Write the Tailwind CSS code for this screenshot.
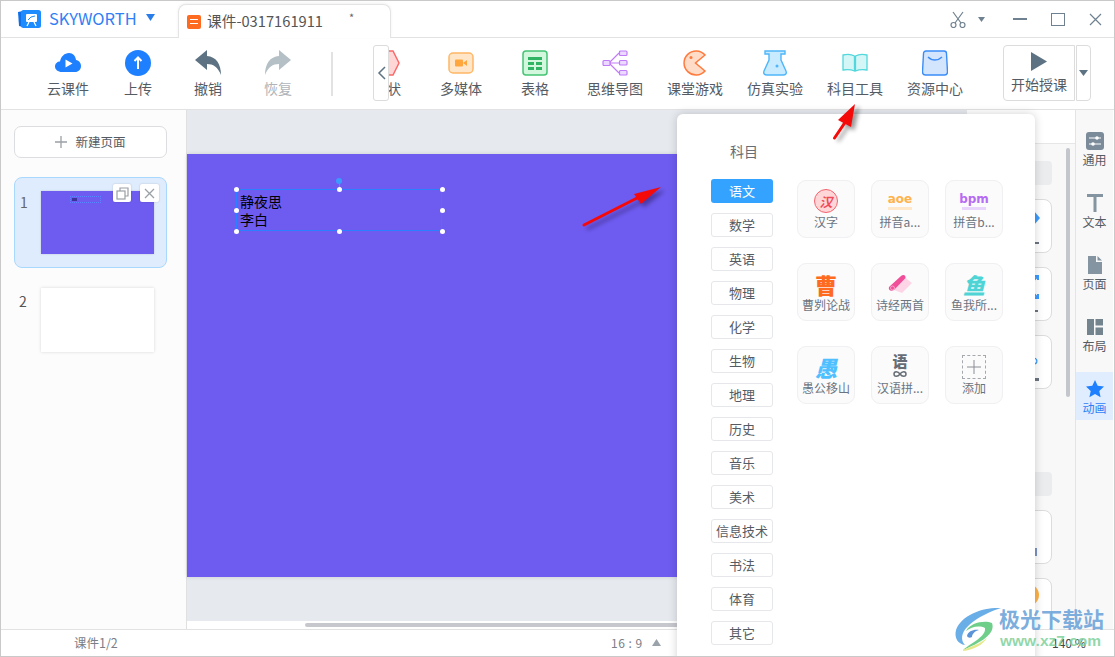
<!DOCTYPE html>
<html lang="zh">
<head>
    <meta charset="UTF-8">
    <meta name="viewport" content="width=device-width, initial-scale=1.0">
    <title>SKYWORTH</title>
    <script src="https://cdn.jsdelivr.net/npm/@tailwindcss/browser@4"></script>
</head>
<body class="bg-white">

<div class="relative w-[1115px] h-[657px] overflow-hidden border border-[#c9c9c9] bg-white text-[#555b63] flex flex-col [font-family:'Noto_Sans_CJK_SC','Liberation_Sans',sans-serif]">

    <!-- title bar -->
    <div class="relative h-[37px] shrink-0 border-b border-[#e2e2e2] flex items-center">
        <svg class="ml-[16px] mt-[-1px]" width="25" height="20" viewBox="0 0 25 20">
            <path d="M1 3 L6 2 L6 18 L2 17 Z" fill="#0f6fe8"/>
            <rect x="4" y="1" width="20" height="18" rx="2.500" fill="#1e8cff"/>
            <rect x="9" y="5" width="11" height="8" rx="1" fill="#fff"/>
            <path d="M12 13 L10 17 M17 13 L19 17" stroke="#fff" stroke-width="1.200" fill="none"/>
            <path d="M11 11 L14 8 L18 7" stroke="#1e8cff" stroke-width="1" fill="none"/>
        </svg>
        <span class="ml-[7px] text-[16.500px] leading-none text-[#2f80f6] mt-[-2px]">SKYWORTH</span>
        <svg class="ml-[9px] mt-[-3px]" width="9" height="7" viewBox="0 0 9 7"><path d="M0 0 H9 L4.500 7 Z" fill="#2a7de8"/></svg>

        <div class="absolute left-[177px] top-[3px] w-[213px] h-[34px] bg-white rounded-t-[8px] border border-b-0 border-[#e4e4e4] shadow-[0_-1px_3px_rgba(0,0,0,0.06)] flex items-center pl-[8px]">
            <div class="w-[14px] h-[14px] rounded-[2px] bg-[#ff6a21] flex flex-col items-center justify-center gap-[3px]">
                <div class="w-[8px] h-[1px] bg-white"></div>
                <div class="w-[8px] h-[1px] bg-white"></div>
            </div>
            <span class="ml-[6px] text-[14.700px] leading-none text-[#555]">课件-0317161911</span>
            <span class="absolute left-[170px] top-[7px] text-[11px] leading-none text-[#666]">*</span>
        </div>

        <div class="ml-auto flex items-center text-[#6b7f90]">
            <svg width="16" height="17" viewBox="0 0 16 17" fill="none" stroke="#6f8190" stroke-width="1.200"><path d="M3 1 L11 12 M13 1 L5 12"/><circle cx="3.500" cy="14" r="2.500"/><circle cx="12.500" cy="14" r="2.500"/></svg>
            <svg class="ml-[12px] mr-[28px]" width="7" height="5" viewBox="0 0 7 5"><path d="M0 0 H7 L3.500 5 Z" fill="#6f8190"/></svg>
            <div class="w-[14px] h-[2px] bg-[#6f8190]"></div>
            <div class="ml-[24px] w-[14px] h-[13px] border-[1.500px] border-[#6f8190]"></div>
            <svg class="ml-[24px] mr-[12px]" width="13" height="13" viewBox="0 0 13 13" stroke="#6f8190" stroke-width="1.200"><path d="M1 1 L12 12 M12 1 L1 12"/></svg>
        </div>
    </div>

    <!-- toolbar -->
    <div class="relative h-[72px] shrink-0 border-b border-[#e2e2e2] flex items-start pl-[32px] text-[14px] leading-[18px] text-[#555b63]">
        <div class="w-[70px] pt-[12px] flex flex-col items-center">
            <svg width="26" height="26" viewBox="0 0 26 26"><path d="M7 22 C3 22 0 19.500 0 16.500 C0 13.500 2.500 11.500 5 11.500 C6 6.500 9.500 3 14 3 C18 3 20.500 6 21 10 C24 10.500 26 13 26 16 C26 19.500 23.500 22 20 22 Z" fill="#1e7fff"/><path d="M10.500 9.500 L17.500 13.500 L10.500 17.500 Z" fill="#fff"/></svg>
            <span class="mt-[3px]">云课件</span>
        </div>
        <div class="w-[70px] pt-[12px] flex flex-col items-center">
            <svg width="26" height="26" viewBox="0 0 26 26"><circle cx="13" cy="13" r="13" fill="#1e7fff"/><path d="M13 19 V8 M9.500 11 L13 7.500 L16.500 11" stroke="#fff" stroke-width="2" fill="none"/></svg>
            <span class="mt-[3px]">上传</span>
        </div>
        <div class="w-[70px] pt-[12px] flex flex-col items-center">
            <svg width="26" height="26" viewBox="0 0 26 26"><path d="M12 0 L0 10 L12 20 V14 C18 14 23 17 26 25 C26 14 21 6.500 12 6 Z" fill="#5d7384"/></svg>
            <span class="mt-[3px]">撤销</span>
        </div>
        <div class="w-[70px] pt-[12px] flex flex-col items-center text-[#b0b4b8]">
            <svg width="26" height="26" viewBox="0 0 26 26"><path d="M14 0 L26 10 L14 20 V14 C8 14 3 17 0 25 C0 14 5 6.500 14 6 Z" fill="#b4bfc6"/></svg>
            <span class="mt-[3px]">恢复</span>
        </div>

        <div class="ml-[18px] mt-[14px] w-[2px] h-[44px] bg-[#e2e2e2]"></div>

        <div class="ml-[20px] w-[68px] pt-[12px] flex flex-col items-center">
            <svg width="26" height="26" viewBox="0 0 26 26"><path d="M7 1 H19 L25 13 L19 25 H7 L1 13 Z" fill="#ffd6d6" stroke="#f96a6a" stroke-width="1.500"/></svg>
            <span class="mt-[3px]">形状</span>
        </div>
        <div class="w-[80px] pt-[12px] flex flex-col items-center">
            <svg width="26" height="26" viewBox="0 0 26 26"><rect x="1" y="3" width="24" height="20" rx="4" fill="#ffe6c9" stroke="#ffb765" stroke-width="1.500"/><rect x="7" y="9.500" width="8" height="7" rx="1" fill="#ffa63d"/><path d="M15 13 L19 10 V16 Z" fill="#ffa63d"/></svg>
            <span class="mt-[3px]">多媒体</span>
        </div>
        <div class="w-[68px] pt-[12px] flex flex-col items-center">
            <svg width="26" height="26" viewBox="0 0 26 26"><rect x="1" y="1" width="24" height="24" rx="3" fill="#d2f7dd" stroke="#45c474" stroke-width="1.500"/><path d="M6 7 H20 V10 H6 Z M6 12 H12 V15 H6 Z M14 12 H20 V15 H14 Z M6 17 H12 V20 H6 Z M14 17 H20 V20 H14 Z" fill="#2fb463"/></svg>
            <span class="mt-[3px]">表格</span>
        </div>
        <div class="ml-[6px] w-[80px] pt-[12px] flex flex-col items-center">
            <svg width="26" height="26" viewBox="0 0 26 26" fill="#ecd9ff" stroke="#c07cf7" stroke-width="1.200"><path d="M7 13 L17 3 M7 13 H17 M7 13 L17 23" fill="none"/><rect x="1" y="10.500" width="7" height="5" rx="1"/><rect x="17.500" y="1" width="7.500" height="4.500" rx="1"/><rect x="17.500" y="10.500" width="7.500" height="4.500" rx="1"/><rect x="17.500" y="20.500" width="7.500" height="4.500" rx="1"/></svg>
            <span class="mt-[3px]">思维导图</span>
        </div>
        <div class="w-[80px] pt-[12px] flex flex-col items-center">
            <svg width="26" height="26" viewBox="0 0 26 26"><path d="M23 5 A12 12 0 1 0 23 21 L13.500 13 Z" fill="#ffdcc8" stroke="#ff7a3d" stroke-width="1.500"/><circle cx="9" cy="7.500" r="1.500" fill="#ff7a3d"/></svg>
            <span class="mt-[3px]">课堂游戏</span>
        </div>
        <div class="w-[80px] pt-[12px] flex flex-col items-center">
            <svg width="26" height="26" viewBox="0 0 26 26"><path d="M3 1 H23 V4 H19 V10 L24 21 C25 23.500 23.500 25 21 25 H5 C2.500 25 1 23.500 2 21 L7 10 V4 H3 Z" fill="#c8ebff" stroke="#4fb6f9" stroke-width="1.400"/><circle cx="15" cy="16" r="1.500" fill="#4fb6f9"/></svg>
            <span class="mt-[3px]">仿真实验</span>
        </div>
        <div class="w-[80px] pt-[12px] flex flex-col items-center">
            <svg width="26" height="26" viewBox="0 0 26 26"><path d="M1 5 C5 4 9 4 12.500 6 V21 C9 19.500 5 19.500 1 20 Z M25 5 C21 4 17 4 13.500 6 V21 C17 19.500 21 19.500 25 20 Z" fill="#d5f6f6" stroke="#52d7dc" stroke-width="1.300"/></svg>
            <span class="mt-[3px]">科目工具</span>
        </div>
        <div class="w-[80px] pt-[12px] flex flex-col items-center">
            <svg width="26" height="26" viewBox="0 0 26 26"><path d="M4 1 H22 C23.500 1 24.500 2 24.500 3.500 L25.500 22 C25.500 24 24.500 25 22.500 25 H3.500 C1.500 25 0.500 24 0.500 22 L1.500 3.500 C1.500 2 2.500 1 4 1 Z" fill="#d3e4fd" stroke="#3a8cf8" stroke-width="1.400"/><path d="M6 7 C10 11 16 11 20 7" stroke="#3a8cf8" stroke-width="1.400" fill="none"/></svg>
            <span class="mt-[3px]">资源中心</span>
        </div>

        <div class="ml-auto mr-[23px] mt-[7px] flex">
            <div class="w-[72px] h-[56px] rounded-l-[4px] border border-[#dcdcdc] flex flex-col items-center pt-[6px]">
                <svg width="18" height="19" viewBox="0 0 18 19"><path d="M1 0 L17 9.500 L1 19 Z" fill="#5d7384"/></svg>
                <span class="mt-[4px] text-[#555b63]">开始授课</span>
            </div>
            <div class="w-[15px] h-[56px] ml-[1px] rounded-r-[4px] border border-[#dcdcdc] flex items-center justify-center">
                <svg width="9" height="6" viewBox="0 0 9 6"><path d="M0 0 H9 L4.500 6 Z" fill="#5d7384"/></svg>
            </div>
        </div>

        <div class="absolute left-[372px] top-[7px] w-[16px] h-[56px] bg-white rounded-[3px] border border-[#dcdcdc] flex items-center justify-center">
            <svg width="9" height="14" viewBox="0 0 9 14" fill="none" stroke="#5d7384" stroke-width="1.500"><path d="M8 1 L2 7 L8 13"/></svg>
        </div>
    </div>

    <!-- main -->
    <div class="h-[519px] shrink-0 flex">
        <!-- pages -->
        <div class="w-[186px] shrink-0 bg-[#fcfcfc] border-r border-[#e0e0e0] pl-[13px] pr-[19px] pt-[16px]">
            <div class="h-[32px] rounded-[7px] border border-[#dcdde0] bg-white flex items-center justify-center text-[12.500px] text-[#555b63]">
                <svg class="mr-[8px]" width="12" height="12" viewBox="0 0 12 12" stroke="#9aa0a6" stroke-width="1.300"><path d="M6 0 V12 M0 6 H12"/></svg>
                新建页面
            </div>
            <div class="relative mt-[19px] h-[91px] rounded-[8px] border border-[#a9d8ff] bg-[#dfecfd]">
                <span class="absolute left-[5px] top-[14px] text-[14px] leading-[20px] text-[#666]">1</span>
                <div class="absolute left-[26px] top-[13px] w-[113px] h-[63px] bg-[#6e5cf0] shadow-[0_0_2px_rgba(0,0,0,0.15)]">
                    <div class="absolute left-[29px] top-[5px] w-[31px] h-[7px] border border-dotted border-[#5a86ff]">
                        <div class="w-[5px] h-[3px] mt-[1px] ml-[1px] bg-[#3a3298]"></div>
                    </div>
                </div>
                <div class="absolute left-[98px] top-[6px] w-[18px] h-[18px] rounded-[2px] bg-white shadow-[0_0_2px_rgba(0,0,0,0.2)] flex items-center justify-center">
                    <svg width="13" height="13" viewBox="0 0 13 13" fill="none" stroke="#9aa0a6" stroke-width="1.200"><rect x="1" y="4" width="8" height="8"/><path d="M4 4 V1 H12 V9 H9"/></svg>
                </div>
                <div class="absolute left-[125px] top-[6px] w-[19px] h-[18px] rounded-[2px] bg-white shadow-[0_0_2px_rgba(0,0,0,0.2)] flex items-center justify-center">
                    <svg width="11" height="11" viewBox="0 0 11 11" stroke="#9aa0a6" stroke-width="1.300"><path d="M1 1 L10 10 M10 1 L1 10"/></svg>
                </div>
            </div>
            <div class="relative mt-[20px] h-[64px]">
                <span class="absolute left-[5px] top-[3px] text-[14px] leading-[20px] text-[#555]">2</span>
                <div class="absolute left-[27px] top-0 w-[113px] h-[64px] bg-white shadow-[0_0_3px_rgba(0,0,0,0.15)]"></div>
            </div>
        </div>

        <!-- canvas -->
        <div class="w-[780px] shrink-0 flex flex-col">
            <div class="h-[511px] bg-[#e6e9ee] pt-[44px]">
                <div class="relative w-[752px] h-[423px] bg-[#6e5cf0] shadow-[0_0_4px_rgba(0,0,0,0.12)]">
                    <div class="absolute left-[49px] top-[35px] w-[206px] h-[42px] border border-[#2a80ff] pl-[3px] pt-[2px] text-[14px] leading-[18px] text-black">
                        静夜思<br>李白
                        <span class="absolute left-[102px] top-[-7px] w-[1px] h-[7px] bg-[#3b9bff]"></span>
                        <span class="absolute left-[99px] top-[-12px] w-[6px] h-[6px] rounded-full bg-[#3b9bff]"></span>
                        <span class="absolute left-[-3px] top-[-3px] w-[5px] h-[5px] rounded-full bg-white"></span>
                        <span class="absolute left-[100px] top-[-3px] w-[5px] h-[5px] rounded-full bg-white"></span>
                        <span class="absolute left-[203px] top-[-3px] w-[5px] h-[5px] rounded-full bg-white"></span>
                        <span class="absolute left-[-3px] top-[18px] w-[5px] h-[5px] rounded-full bg-white"></span>
                        <span class="absolute left-[203px] top-[18px] w-[5px] h-[5px] rounded-full bg-white"></span>
                        <span class="absolute left-[-3px] top-[39px] w-[5px] h-[5px] rounded-full bg-white"></span>
                        <span class="absolute left-[100px] top-[39px] w-[5px] h-[5px] rounded-full bg-white"></span>
                        <span class="absolute left-[203px] top-[39px] w-[5px] h-[5px] rounded-full bg-white"></span>
                    </div>
                </div>
            </div>
            <div class="h-[8px] bg-white pl-[118px] pt-[2px]">
                <div class="w-[500px] h-[4px] rounded-full bg-[#c6c8cd]"></div>
            </div>
        </div>

        <!-- property panel behind the popup -->
        <div class="relative w-[108px] shrink-0 flex flex-col">
            <div class="h-[33px] bg-white"></div>
            <div class="relative flex-1 overflow-hidden bg-[#f8f8f8] border-t border-[#e6e6e6] pt-[17px] pr-[23px]">
                <div class="h-[24px] rounded-[4px] bg-[#ebecee]"></div>
                <div class="relative mt-[14px] h-[54px] rounded-[8px] border border-[#dcdcdc] bg-white">
                    <div class="absolute right-[11px] top-[4px] w-[12px] h-[28px] bg-[#3b9bff] [clip-path:polygon(0_0,100%_50%,0_100%)]"></div>
                    <div class="absolute right-[12px] top-[42px] w-[4px] h-[2px] bg-[#6b7480]"></div>
                </div>
                <div class="relative mt-[14px] h-[54px] rounded-[8px] border border-[#dcdcdc] bg-white">
                    <svg class="absolute right-[12px] top-[7px]" width="8" height="24" viewBox="0 0 8 24" fill="none" stroke="#3b9bff" stroke-width="2"><path d="M0 8 L6 2 M3 1 H7 V5 M0 16 L6 22 M3 23 H7 V19"/></svg>
                    <div class="absolute right-[13px] top-[42px] w-[3px] h-[2px] bg-[#6b7480]"></div>
                </div>
                <div class="relative mt-[14px] h-[54px] rounded-[8px] border border-[#dcdcdc] bg-white">
                    <svg class="absolute right-[10px] top-[8px]" width="10" height="24" viewBox="0 0 10 24" fill="none" stroke="#3b9bff" stroke-width="1.200"><path d="M1 1 V12 M3 14 C7 15 7 20 2 20"/></svg>
                    <div class="absolute right-[12px] top-[42px] w-[4px] h-[3px] bg-[#6b7480]"></div>
                </div>
                <div class="mt-[83px] h-[24px] rounded-[4px] bg-[#ebecee]"></div>
                <div class="relative mt-[14px] h-[54px] rounded-[8px] border border-[#dcdcdc] bg-white">
                    <div class="absolute right-[14px] top-[37px] w-[3px] h-[8px] bg-[#7d94c4]"></div>
                </div>
                <div class="relative mt-[14px] h-[54px] rounded-[8px] border border-[#dcdcdc] bg-white">
                    <div class="absolute right-[12px] top-[5px] w-[14px] h-[22px] rounded-r-full bg-[#ffb347]"></div>
                </div>
                <div class="absolute right-[5px] top-[4px] w-[4px] h-[249px] rounded-full bg-[#c3c6cc]"></div>
            </div>
        </div>

        <!-- right rail -->
        <div class="w-[38px] shrink-0 bg-[#f8f8f8] border-l border-[#e4e4e4] pt-[14px] flex flex-col gap-[14px] text-[12px] leading-[16px] text-[#555b63]">
            <div class="h-[48px] pt-[8px] flex flex-col items-center">
                <svg width="18" height="18" viewBox="0 0 18 18"><rect width="18" height="18" rx="3" fill="#7b8b99"/><path d="M3 6 H15 M3 12 H15" stroke="#fff" stroke-width="1.200"/><circle cx="11" cy="6" r="1.800" fill="#fff"/><circle cx="7" cy="12" r="1.800" fill="#fff"/></svg>
                <span class="mt-[2px]">通用</span>
            </div>
            <div class="h-[48px] pt-[8px] flex flex-col items-center">
                <svg width="18" height="18" viewBox="0 0 18 18"><path d="M1 0 H17 V3 H10.500 V18 H7.500 V3 H1 Z" fill="#8494a1"/></svg>
                <span class="mt-[2px]">文本</span>
            </div>
            <div class="h-[48px] pt-[8px] flex flex-col items-center">
                <svg width="18" height="18" viewBox="0 0 18 18"><path d="M2 0 H10 V6 H16 V18 H2 Z M11.500 0 L16 4.500 H11.500 Z" fill="#8494a1"/></svg>
                <span class="mt-[2px]">页面</span>
            </div>
            <div class="h-[48px] pt-[8px] flex flex-col items-center">
                <svg width="18" height="18" viewBox="0 0 18 18"><path d="M1 1 H8 V17 H1 Z M9.500 1 H17 V7.500 H9.500 Z M9.500 9.500 H17 V17 H9.500 Z" fill="#73848f"/></svg>
                <span class="mt-[2px]">布局</span>
            </div>
            <div class="h-[48px] pt-[8px] flex flex-col items-center bg-[#e0edfe] text-[#2f7ff5]">
                <svg width="18" height="18" viewBox="0 0 18 18"><path d="M9 0 L11.700 5.800 L18 6.600 L13.300 10.900 L14.600 17.200 L9 14 L3.400 17.200 L4.700 10.900 L0 6.600 L6.300 5.800 Z" fill="#1e7fff"/></svg>
                <span class="mt-[2px]">动画</span>
            </div>
        </div>
    </div>

    <!-- status bar -->
    <div class="relative h-[27px] shrink-0 border-t border-[#e2e2e2] bg-white text-[12.500px] text-[#7a8087]">
        <span class="absolute left-[73px] top-[5px] leading-[16px]">课件1/2</span>
        <span class="absolute left-[610px] top-[5px] leading-[16px] text-[12px] tracking-[0.5px]">16 : 9</span>
        <svg class="absolute left-[651px] top-[9px]" width="9" height="7" viewBox="0 0 9 7"><path d="M4.500 0 L9 7 H0 Z" fill="#9aa2aa"/></svg>
        <span class="absolute left-[1051px] top-[5px] leading-[16px] text-[12px] text-[#444]">140 %</span>
    </div>

    <!-- subject popup -->
    <div class="absolute left-[676px] top-[113px] w-[358px] h-[560px] bg-white rounded-[6px] shadow-[0_0_10px_rgba(0,0,0,0.18)] flex">
        <div class="w-[120px] shrink-0 flex flex-col items-start pl-[34px] pt-[27px] text-[13px] text-[#555b63]">
            <div class="w-[66px] text-center text-[14px] leading-[20px] text-[#666d75] mb-[18px]">科目</div>
            <div class="flex flex-col gap-[10px]">
                <div class="w-[62px] h-[24px] rounded-[3px] bg-[#33a3ff] text-white flex items-center justify-center">语文</div>
                <div class="w-[62px] h-[24px] rounded-[3px] border border-[#e6e7ea] flex items-center justify-center">数学</div>
                <div class="w-[62px] h-[24px] rounded-[3px] border border-[#e6e7ea] flex items-center justify-center">英语</div>
                <div class="w-[62px] h-[24px] rounded-[3px] border border-[#e6e7ea] flex items-center justify-center">物理</div>
                <div class="w-[62px] h-[24px] rounded-[3px] border border-[#e6e7ea] flex items-center justify-center">化学</div>
                <div class="w-[62px] h-[24px] rounded-[3px] border border-[#e6e7ea] flex items-center justify-center">生物</div>
                <div class="w-[62px] h-[24px] rounded-[3px] border border-[#e6e7ea] flex items-center justify-center">地理</div>
                <div class="w-[62px] h-[24px] rounded-[3px] border border-[#e6e7ea] flex items-center justify-center">历史</div>
                <div class="w-[62px] h-[24px] rounded-[3px] border border-[#e6e7ea] flex items-center justify-center">音乐</div>
                <div class="w-[62px] h-[24px] rounded-[3px] border border-[#e6e7ea] flex items-center justify-center">美术</div>
                <div class="w-[62px] h-[24px] rounded-[3px] border border-[#e6e7ea] flex items-center justify-center">信息技术</div>
                <div class="w-[62px] h-[24px] rounded-[3px] border border-[#e6e7ea] flex items-center justify-center">书法</div>
                <div class="w-[62px] h-[24px] rounded-[3px] border border-[#e6e7ea] flex items-center justify-center">体育</div>
                <div class="w-[62px] h-[24px] rounded-[3px] border border-[#e6e7ea] flex items-center justify-center">其它</div>
            </div>
        </div>
        <div class="pt-[66px] grid grid-cols-[58px_58px_58px] auto-rows-[58px] gap-x-[16px] gap-y-[25px] text-[12px] leading-[16px] text-[#6b7480]">
            <div class="rounded-[9px] border border-[#f0f0f2] bg-[#fbfbfc] flex flex-col items-center pt-[8px]">
                <div class="w-[24px] h-[24px] rounded-full bg-[#ffd6d8] border border-[#f4646e] flex items-center justify-center text-[13px] leading-none font-bold italic text-[#ee4a58]">汉</div>
                <span class="mt-[1px]">汉字</span>
            </div>
            <div class="rounded-[9px] border border-[#f0f0f2] bg-[#fbfbfc] flex flex-col items-center pt-[8px]">
                <div class="h-[24px] flex flex-col items-center justify-center">
                    <span class="text-[12px] leading-[13px] font-bold text-[#ffb24d] [font-family:'DejaVu_Sans',sans-serif]">aoe</span>
                    <div class="w-[24px] h-[3px] mt-[1px] bg-[#ffe7c9]"></div>
                </div>
                <span class="mt-[1px]">拼音a...</span>
            </div>
            <div class="rounded-[9px] border border-[#f0f0f2] bg-[#fbfbfc] flex flex-col items-center pt-[8px]">
                <div class="h-[24px] flex flex-col items-center justify-center">
                    <span class="text-[12px] leading-[13px] font-bold text-[#b66cf2] [font-family:'DejaVu_Sans',sans-serif]">bpm</span>
                    <div class="w-[24px] h-[3px] mt-[1px] bg-[#e9d4fb]"></div>
                </div>
                <span class="mt-[1px]">拼音b...</span>
            </div>
            <div class="rounded-[9px] border border-[#f0f0f2] bg-[#fbfbfc] flex flex-col items-center pt-[8px]">
                <div class="h-[24px] text-[22px] leading-[24px] font-black text-[#ff6a21]">曹</div>
                <span class="mt-[1px]">曹刿论战</span>
            </div>
            <div class="rounded-[9px] border border-[#f0f0f2] bg-[#fbfbfc] flex flex-col items-center pt-[8px]">
                <svg width="24" height="24" viewBox="0 0 24 24"><path d="M15 4 L24 11 L14 21 L6 18 Z" fill="#fdd5e6"/><path d="M1 15 L13 4 C15 2 18 3 17.500 6 L6 18 C3 20 0 18 1 15 Z" fill="#f04e98"/><circle cx="4.500" cy="16" r="2" fill="none" stroke="#fbb4d3" stroke-width="0.800"/></svg>
                <span class="mt-[1px]">诗经两首</span>
            </div>
            <div class="rounded-[9px] border border-[#f0f0f2] bg-[#fbfbfc] flex flex-col items-center pt-[8px]">
                <div class="h-[24px] text-[22px] leading-[24px] font-black text-[#4fd4d6] italic">鱼</div>
                <span class="mt-[1px]">鱼我所...</span>
            </div>
            <div class="rounded-[9px] border border-[#f0f0f2] bg-[#fbfbfc] flex flex-col items-center pt-[8px]">
                <div class="h-[24px] text-[22px] leading-[24px] font-black text-[#4fc0ff] italic">愚</div>
                <span class="mt-[1px]">愚公移山</span>
            </div>
            <div class="rounded-[9px] border border-[#f0f0f2] bg-[#fbfbfc] flex flex-col items-center pt-[6px]">
                <div class="h-[16px] text-[15px] leading-[16px] font-black text-[#666d75]">语</div>
                <svg class="mt-[1px] mb-[1px]" width="14" height="8" viewBox="0 0 14 8" fill="none" stroke="#666d75" stroke-width="1.500"><path d="M7 4 C5 1 1 1 1 4 C1 7 5 7 7 4 C9 1 13 1 13 4 C13 7 9 7 7 4 Z"/></svg>
                <span class="mt-[1px]">汉语拼...</span>
            </div>
            <div class="rounded-[9px] border border-[#f0f0f2] bg-[#fbfbfc] flex flex-col items-center pt-[8px]">
                <div class="w-[24px] h-[24px] border border-dashed border-[#a5a8ac] flex items-center justify-center">
                    <svg width="14" height="14" viewBox="0 0 14 14" stroke="#8a8e93" stroke-width="1"><path d="M7 0 V14 M0 7 H14"/></svg>
                </div>
                <span class="mt-[1px]">添加</span>
            </div>
        </div>
    </div>

    <!-- red annotation arrows -->
    <svg class="absolute left-[578px] top-[180px] overflow-visible" width="86" height="50" viewBox="0 0 86 50">
        <g opacity="0.45" fill="#20104a" stroke="#20104a" class="blur-[2px]">
            <path d="M8 48 L62 21" stroke-width="3" fill="none"/>
            <path d="M85 10 L59 16 L65 26 Z"/>
        </g>
        <path d="M5 44 L60 16" stroke="#f50a0a" stroke-width="3" stroke-linecap="round" fill="none"/>
        <path d="M82 6 L55 13 L62 23 Z" fill="#f50a0a"/>
    </svg>
    <svg class="absolute left-[828px] top-[100px] overflow-visible" width="34" height="42" viewBox="0 0 34 42">
        <g opacity="0.45" fill="#222" stroke="#222" class="blur-[2px]">
            <path d="M9 40 L20 24" stroke-width="3" fill="none"/>
            <path d="M30 6 L13 22 L25 29 Z"/>
        </g>
        <path d="M5.500 37 L17 20" stroke="#f50a0a" stroke-width="3" stroke-linecap="round" fill="none"/>
        <path d="M26 3 L9 19 L22 26 Z" fill="#f50a0a"/>
    </svg>

    <!-- watermark -->
    <svg class="absolute left-[953px] top-[606px]" width="48" height="44" viewBox="0 0 48 44" fill="none">
        <path d="M47 1 C30 0 8 7 2 23 C0 31 4 37 11 38 C2 28 14 12 47 1 Z" fill="#6aaee8"/>
        <path d="M12 24 C16 16 30 13 38 16 C42 27 26 36 9 43 C18 35 32 30 31 21 C25 18 17 20 12 24 Z" fill="#6fcf8a"/>
        <path d="M9 43 C18 39 26 37 33 31 C29 38 19 43 9 44 Z" fill="#e4e88a"/>
        <path d="M13 29 C14 24 20 22 25 23 C21 24 18 27 18 30 C16 31 14 31 13 29 Z" fill="#5b93d8"/>
    </svg>
    <span class="absolute left-[998px] top-[604px] text-[21px] leading-[26px] font-bold text-[#6ba3d8]/90">极光下载站</span>
    <span class="absolute left-[999px] top-[631px] text-[15.500px] leading-[18px] font-bold text-[#7dd09a]/85 [font-family:'Liberation_Sans',sans-serif]">www.xz7.com</span>
</div>

</body>
</html>
